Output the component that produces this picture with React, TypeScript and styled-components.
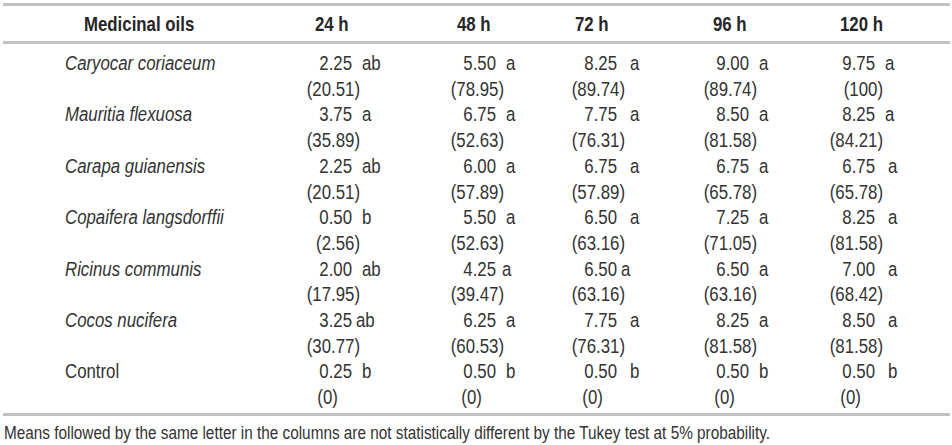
import styled, { createGlobalStyle, css } from "styled-components";

const GlobalStyle = createGlobalStyle`
  body {
    margin: 0;
    background: #ffffff;
    font-family: "Liberation Sans Narrow", "Arial Narrow", "Liberation Sans", Arial, sans-serif;
    color: #333333;
  }
`;

const COLUMNS = "302px 144px 121px 132px 126px 122px";
const LINE = 25.7;
const SQUEEZE = 0.82;

// no condensed face is installed, so squeeze Liberation Sans to Arial Narrow widths
const narrow = css`
  display: inline-block;
  white-space: nowrap;
  transform: scaleX(${SQUEEZE});
  transform-origin: left center;
`;

const Page = styled.div`
  padding: 3px 0 0 3px;
  width: 947px;
`;

const Table = styled.div`
  border-top: 3px solid #c2c2c2;
  border-bottom: 3px solid #c2c2c2;
`;

const Head = styled.div`
  display: grid;
  grid-template-columns: ${COLUMNS};
  height: 35px;
  align-items: center;
  border-bottom: 3px solid #c2c2c2;
`;

const HeadCell = styled.div<{ $indent: number }>`
  padding-left: ${(p) => p.$indent}px;
  font-size: 20.5px;
  font-weight: 700;
  color: #262626;
  span {
    ${narrow}
  }
`;

const Body = styled.div`
  padding: 6px 0 3px;
`;

const Row = styled.div`
  display: grid;
  grid-template-columns: ${COLUMNS};
  font-size: 20.5px;
  line-height: ${LINE}px;
`;

const Name = styled.div<{ $italic: boolean }>`
  padding-left: 62px;
  font-style: ${(p) => (p.$italic ? "italic" : "normal")};
  span {
    ${narrow}
  }
`;

const Cell = styled.div`
  display: flex;
  flex-direction: column;
`;

const Line = styled.div`
  display: flex;
  white-space: nowrap;
`;

const Value = styled.span`
  ${narrow}
  width: 47px;
  text-align: right;
  transform-origin: right center;
`;

const Letter = styled.span<{ $gap: number }>`
  ${narrow}
  margin-left: ${(p) => p.$gap}px;
`;

const Percent = styled.span<{ $short: boolean }>`
  ${narrow}
  width: ${55 / SQUEEZE}px;
  box-sizing: border-box;
  text-align: ${(p) => (p.$short ? "left" : "right")};
  padding-left: ${(p) => (p.$short ? 15 : 0)}px;
`;

const Note = styled.p`
  margin: 7px 0 0 1px;
  font-size: 18.7px;
  line-height: 20px;
  span {
    ${narrow}
  }
`;

type Entry = [string, string, string, number?];

interface Oil {
  name: string;
  italic: boolean;
  values: Entry[];
}

const headers: { label: string; indent: number }[] = [
  { label: "Medicinal oils", indent: 81 },
  { label: "24 h", indent: 10 },
  { label: "48 h", indent: 8 },
  { label: "72 h", indent: 5 },
  { label: "96 h", indent: 11 },
  { label: "120 h", indent: 12 },
];

const oils: Oil[] = [
  {
    name: "Caryocar coriaceum",
    italic: true,
    values: [
      ["2.25", "ab", "(20.51)"],
      ["5.50", "a", "(78.95)"],
      ["8.25", "a", "(89.74)", 13],
      ["9.00", "a", "(89.74)"],
      ["9.75", "a", "(100)"],
    ],
  },
  {
    name: "Mauritia flexuosa",
    italic: true,
    values: [
      ["3.75", "a", "(35.89)"],
      ["6.75", "a", "(52.63)"],
      ["7.75", "a", "(76.31)", 13],
      ["8.50", "a", "(81.58)"],
      ["8.25", "a", "(84.21)"],
    ],
  },
  {
    name: "Carapa guianensis",
    italic: true,
    values: [
      ["2.25", "ab", "(20.51)"],
      ["6.00", "a", "(57.89)"],
      ["6.75", "a", "(57.89)", 13],
      ["6.75", "a", "(65.78)"],
      ["6.75", "a", "(65.78)", 13],
    ],
  },
  {
    name: "Copaifera langsdorffii",
    italic: true,
    values: [
      ["0.50", "b", "(2.56)"],
      ["5.50", "a", "(52.63)"],
      ["6.50", "a", "(63.16)", 13],
      ["7.25", "a", "(71.05)"],
      ["8.25", "a", "(81.58)", 13],
    ],
  },
  {
    name: "Ricinus communis",
    italic: true,
    values: [
      ["2.00", "ab", "(17.95)"],
      ["4.25", "a", "(39.47)", 6],
      ["6.50", "a", "(63.16)", 4],
      ["6.50", "a", "(63.16)"],
      ["7.00", "a", "(68.42)", 13],
    ],
  },
  {
    name: "Cocos nucifera",
    italic: true,
    values: [
      ["3.25", "ab", "(30.77)", 4],
      ["6.25", "a", "(60.53)"],
      ["7.75", "a", "(76.31)", 13],
      ["8.25", "a", "(81.58)"],
      ["8.50", "a", "(81.58)", 13],
    ],
  },
  {
    name: "Control",
    italic: false,
    values: [
      ["0.25", "b", "(0)"],
      ["0.50", "b", "(0)"],
      ["0.50", "b", "(0)", 13],
      ["0.50", "b", "(0)"],
      ["0.50", "b", "(0)", 13],
    ],
  },
];

export default function App() {
  return (
    <>
      <GlobalStyle />
      <Page>
        <Table>
          <Head>
            {headers.map((h) => (
              <HeadCell key={h.label} $indent={h.indent}>
                <span>{h.label}</span>
              </HeadCell>
            ))}
          </Head>
          <Body>
            {oils.map((oil) => (
              <Row key={oil.name}>
                <Name $italic={oil.italic}>
                  <span>{oil.name}</span>
                </Name>
                {oil.values.map(([value, letter, pct, gap], i) => (
                  <Cell key={i}>
                    <Line>
                      <Value>{value}</Value>
                      <Letter $gap={gap ?? 10}>{letter}</Letter>
                    </Line>
                    <Line>
                      <Percent $short={pct === "(0)"}>{pct}</Percent>
                    </Line>
                  </Cell>
                ))}
              </Row>
            ))}
          </Body>
        </Table>
        <Note>
          <span>
            Means followed by the same letter in the columns are not
            statistically different by the Tukey test at 5% probability.
          </span>
        </Note>
      </Page>
    </>
  );
}
